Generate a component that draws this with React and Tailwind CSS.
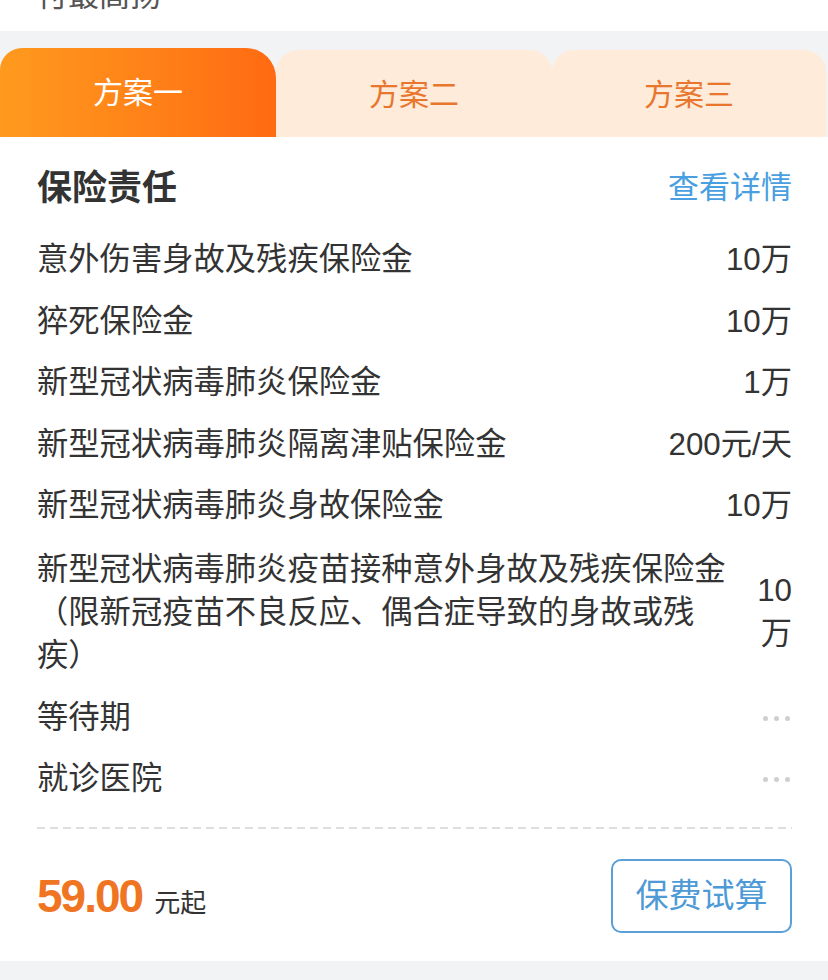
import React from 'react'

const font = { fontFamily: '"Liberation Sans", "Noto Sans CJK SC", sans-serif' }

const rows = [
  { name: '意外伤害身故及残疾保险金', value: '10万' },
  { name: '猝死保险金', value: '10万' },
  { name: '新型冠状病毒肺炎保险金', value: '1万' },
  { name: '新型冠状病毒肺炎隔离津贴保险金', value: '200元/天' },
  { name: '新型冠状病毒肺炎身故保险金', value: '10万' },
]

function Dots() {
  return (
    <div className="flex items-center gap-[6px] pr-[2px]">
      <span className="w-[5px] h-[5px] rounded-full bg-[#cfcfcf]" />
      <span className="w-[5px] h-[5px] rounded-full bg-[#cfcfcf]" />
      <span className="w-[5px] h-[5px] rounded-full bg-[#cfcfcf]" />
    </div>
  )
}

export default function App() {
  return (
    <div className="w-[828px] h-[980px] bg-[#f2f3f5] text-[#333]" style={font}>
      {/* cut-off line from the block above */}
      <div className="h-[31px] bg-white overflow-hidden px-[37px]">
        <div className="-mt-[20px] text-[31px] leading-none text-[#555]">付最高扬</div>
      </div>

      <div className="h-[17px]" />

      {/* plan tabs */}
      <div className="grid grid-cols-3 h-[89px] items-end">
        <div className="h-[89px] rounded-tl-[22px] rounded-tr-[30px] bg-gradient-to-r from-[#ff9a1e] to-[#ff6a12] flex items-center justify-center text-white text-[30px]">
          方案一
        </div>
        <div className="h-[87px] rounded-t-[22px] bg-[#feebda] flex items-center justify-center text-[#e9762d] text-[30px] pt-[2px]">
          方案二
        </div>
        <div className="h-[87px] rounded-t-[22px] bg-[#feebda] flex items-center justify-center text-[#e9762d] text-[30px] pt-[2px] mr-[2px]">
          方案三
        </div>
      </div>

      {/* coverage */}
      <div className="bg-white pr-[36px] pl-[37px] pb-[28px]">
        <div className="flex items-center justify-between pt-[26px] h-[74px]">
          <div className="text-[35px] font-bold leading-none">保险责任</div>
          <div className="text-[31px] leading-none text-[#4a9fe0]">查看详情</div>
        </div>
        <div className="h-[19px]" />

        {rows.map((r) => (
          <div key={r.name} className="flex items-center justify-between h-[61.5px] text-[31.3px]">
            <span>{r.name}</span>
            <span>{r.value}</span>
          </div>
        ))}

        <div className="flex items-center gap-[23px] pt-[10px] pb-[11px] text-[31.3px] leading-[43px]">
          <div className="flex-1">
            新型冠状病毒肺炎疫苗接种意外身故及残疾保险金（限新冠疫苗不良反应、偶合症导致的身故或残疾）
          </div>
          <div className="w-[36px] text-right">10万</div>
        </div>

        <div className="flex items-center justify-between h-[61.5px] text-[31.3px]">
          <span>等待期</span>
          <Dots />
        </div>
        <div className="flex items-center justify-between h-[61.5px] text-[31.3px]">
          <span>就诊医院</span>
          <Dots />
        </div>

        <div className="mt-[16px] h-[2px] bg-[repeating-linear-gradient(90deg,#dedede_0_8px,transparent_8px_13px)]" />

        <div className="flex items-center justify-between mt-[30px]">
          <div className="flex items-baseline gap-[12px]">
            <span className="text-[46px] font-bold text-[#f07522] tracking-[-2px] leading-none">59.00</span>
            <span className="text-[26px] leading-none">元起</span>
          </div>
          <div className="w-[181px] h-[74px] rounded-[10px] border-2 border-[#5a9fd6] flex items-center justify-center text-[33px] text-[#4d9ad6]">
            保费试算
          </div>
        </div>
      </div>
    </div>
  )
}
